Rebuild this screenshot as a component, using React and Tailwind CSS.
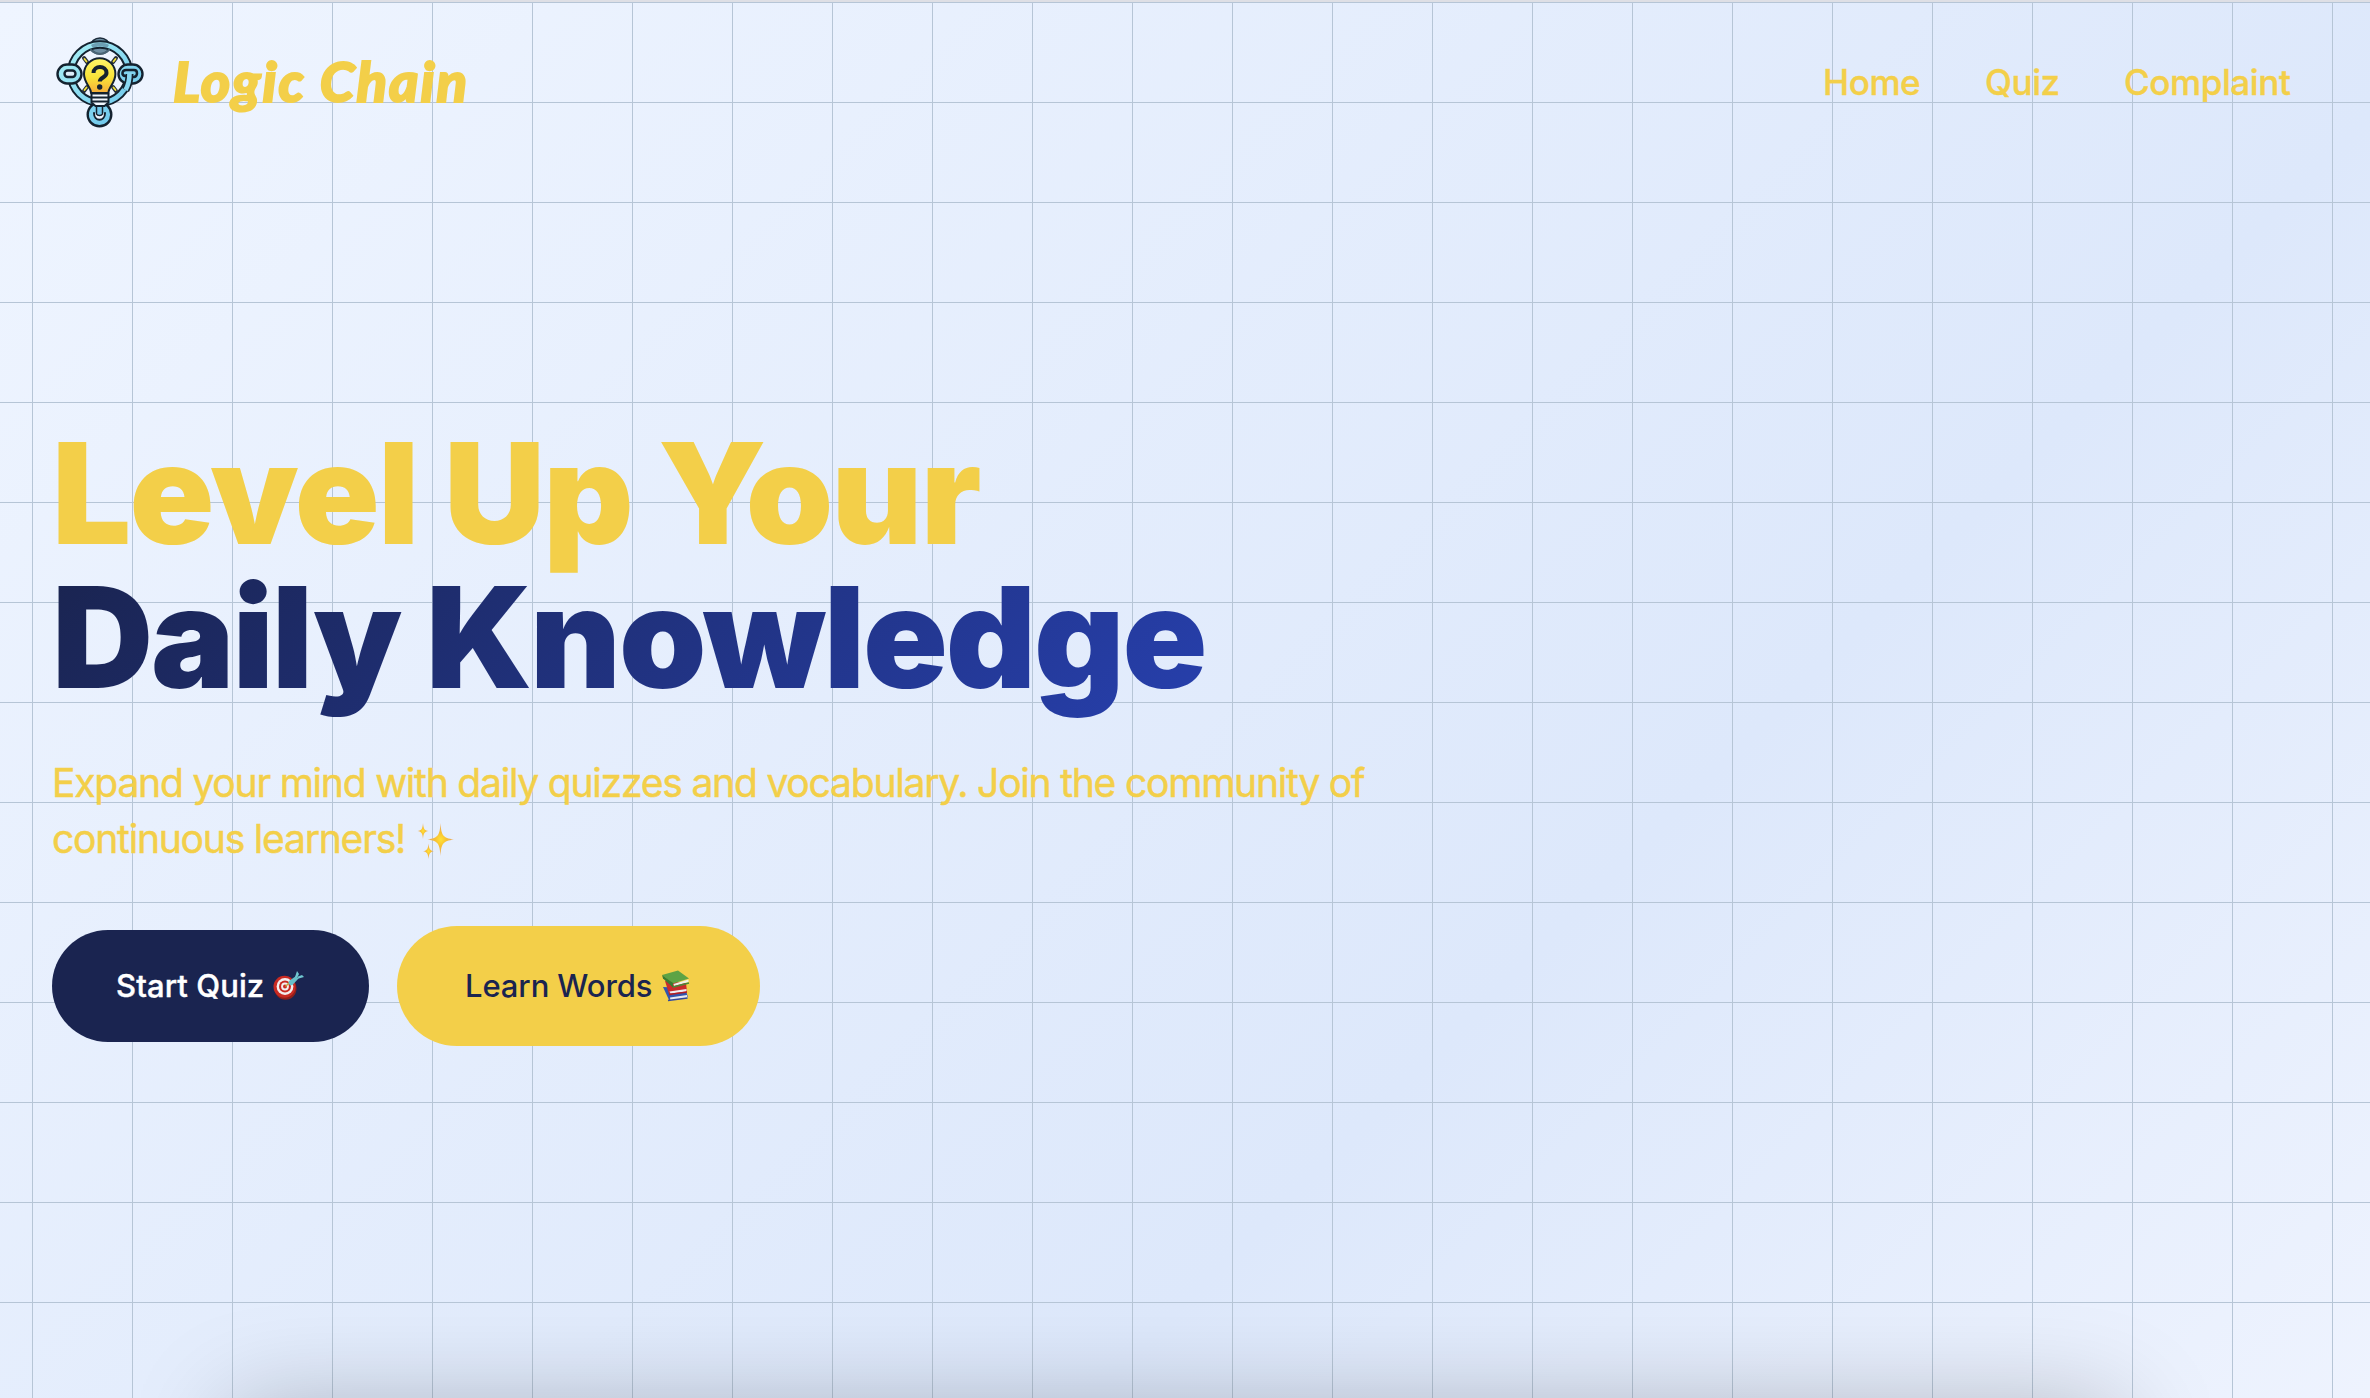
function Logo() {
  return (
    <svg className="-ml-[2px] block h-[100px] w-24" viewBox="50 32 96 100" fill="none" strokeLinecap="round" strokeLinejoin="round">
      <defs>
        <linearGradient id="bulb" x1="0" y1="58" x2="0" y2="94" gradientUnits="userSpaceOnUse">
          <stop offset="0" stopColor="#fff86a" />
          <stop offset="0.55" stopColor="#f8e238" />
          <stop offset="1" stopColor="#f5a93a" />
        </linearGradient>
        <linearGradient id="ring" x1="60" y1="40" x2="140" y2="125" gradientUnits="userSpaceOnUse">
          <stop offset="0" stopColor="#aef3f6" />
          <stop offset="1" stopColor="#62bfea" />
        </linearGradient>
      </defs>
      <ellipse cx="100" cy="46" rx="9.5" ry="8" fill="#6f8fa3" stroke="#1b2b3a" strokeWidth="1.5" />
      <circle cx="100" cy="73.500" r="29" stroke="#14222f" strokeWidth="8.600" />
      <circle cx="100" cy="73.500" r="29" stroke="url(#ring)" strokeWidth="4.600" />
      <path d="M91 45c4-3 14-3 18 0l-2 3c-4-2-10-2-14 0z" fill="#5a8299" opacity=".7" />
      <path d="M91 50c5 5 13 5 18 0" stroke="#4a6475" strokeWidth="2" />
      <path d="M84 58l3 4M116 58l-3 4M84 91l3-4M116 91l-3-4" stroke="#28303a" strokeWidth="4" />
      <path d="M84.500 59l2 2.500M115.500 59l-2 2.500M84.500 90l2-2.500M115.500 90l-2-2.500" stroke="#f4e23b" strokeWidth="1.800" />
      <rect x="57.500" y="64.500" width="24" height="19" rx="9.500" fill="url(#ring)" stroke="#14222f" strokeWidth="2.400" />
      <rect x="64.500" y="70.500" width="11" height="6.500" rx="3.200" fill="#dceefa" stroke="#14222f" strokeWidth="2.400" />
      <rect x="118.500" y="64.500" width="24" height="19" rx="9.500" fill="url(#ring)" stroke="#14222f" strokeWidth="2.400" />
      <path d="M125 76c-4-1-3-6 1-6h8c4 0 4 6 0 7" stroke="#14222f" strokeWidth="2.500" />
      <path d="M129.500 74c0 6-1 11-4 16" stroke="#14222f" strokeWidth="8" strokeLinecap="butt" />
      <path d="M129.500 73c0 6-1 12-4 17" stroke="#8ad8f2" strokeWidth="4.600" strokeLinecap="butt" />
      <circle cx="99.500" cy="114.500" r="11.800" fill="url(#ring)" stroke="#14222f" strokeWidth="2.400" />
      <path d="M94 113c0 9 11 9 11 0" fill="#eef5ff" stroke="#14222f" strokeWidth="2" />
      <path d="M96.500 106h6v8c-1 2-5 2-6 0z" fill="#72c8ec" stroke="#14222f" strokeWidth="1.500" />
      <path d="M91 93c0-6-7-10-7-19a15.700 15.700 0 0 1 31.400 0c0 9-7 13-7 19z" fill="url(#bulb)" stroke="#14222f" strokeWidth="2" />
      <path d="M91.500 93.500h17v9l-4 3.500h-9l-4-3.500z" fill="#f2f8ff" stroke="#14222f" strokeWidth="2" />
      <path d="M92 97.500h16M92 101.500h16" stroke="#14222f" strokeWidth="2" />
      <path d="M93.500 73c0-8 13-8 13 0 0 4.500-6.700 4.500-6.700 8.500" stroke="#14222f" strokeWidth="4" strokeLinecap="butt" />
      <circle cx="99.700" cy="87" r="2.700" fill="#14222f" />
    </svg>
  );
}

function Sparkles() {
  return (
    <svg className="ml-[12px] inline-block h-[38px] w-[38px] align-[-7px]" viewBox="0 0 38 38">
      <defs>
        <radialGradient id="gold">
          <stop offset="0" stopColor="#ffe336" />
          <stop offset="0.4" stopColor="#f8c233" />
          <stop offset="1" stopColor="#e5a668" />
        </radialGradient>
      </defs>
      <path d="M23.500 1c.8 12 2 15 13.500 16.500-11.500 1.500-12.700 4.500-13.500 16.500-.8-12-2-15-13-16.500 11-1.500 12.200-4.500 13-16.500z" fill="url(#gold)" />
      <path d="M6 1c.5 5.500 1.200 7.500 5.500 8-4.300.8-5 2.500-5.500 8-.5-5.500-1.200-7.200-5.500-8 4.300-.5 5-2.500 5.500-8z" fill="url(#gold)" />
      <path d="M11.500 21.500c.5 5 1.200 7 5.500 7.800-4.300.8-5 2.500-5.500 7.700-.5-5.200-1.200-6.900-5.500-7.700 4.300-.8 5-2.800 5.500-7.800z" fill="url(#gold)" />
    </svg>
  );
}

function Target() {
  return (
    <svg className="h-8 w-8 shrink-0" viewBox="0 0 32 32">
      <ellipse cx="12.500" cy="18.500" rx="11" ry="11.200" fill="#8e1f1b" />
      <circle cx="11.500" cy="16.700" r="11" fill="#c92a22" />
      <circle cx="12" cy="16.500" r="8.400" fill="#f3eeee" />
      <circle cx="12" cy="16.500" r="6" fill="#c92a22" />
      <circle cx="12" cy="16.500" r="3.900" fill="#f3eeee" />
      <circle cx="12" cy="16.500" r="2" fill="#c92a22" />
      <path d="M12.500 16.500l4-4" stroke="#c9a53a" strokeWidth="1.500" />
      <path d="M16 11l7-5 2.500 2.500-6 6.500c-2 1-5-1-3.500-4z" fill="#66bfc9" />
      <path d="M22 7l2-6 2 3-1.500 3zM24 9l7-2-2-2-4 1.500z" fill="#6fc6d0" />
    </svg>
  );
}

function Books() {
  return (
    <svg className="h-8 w-7 shrink-0" viewBox="0 0 28 32">
      <path d="M1 17l6 13 19-3-3-9z" fill="#3155ae" />
      <path d="M8 27.500l17-2.500 .5 2.500-17 3z" fill="#e9eaf0" />
      <path d="M6 30.500l19.500-2.500" stroke="#31489c" strokeWidth="1.300" />
      <path d="M3 11l4 13 18-2-1-9z" fill="#c92c2b" />
      <path d="M7.500 21.500l17-2.500v2.500l-16 2z" fill="#eeeef2" />
      <path d="M7 24.500l18-2.500" stroke="#b32025" strokeWidth="1.300" />
      <path d="M0 5l16-4.500 11 8-16 5z" fill="#5da345" />
      <path d="M0 5l11 8v4.500L1 8.500z" fill="#397c31" />
      <path d="M11.500 14l15-4.500v2.500l-14.500 4z" fill="#eef1ea" />
      <path d="M11 17l16-4" stroke="#458c38" strokeWidth="1.300" />
    </svg>
  );
}

const links = [
  { label: "Home", style: "w-[98px]" },
  { label: "Quiz", style: "w-[75px]" },
  { label: "Complaint", style: "w-[168px]" },
];

export default function App() {
  return (
    <div className="relative flex h-[1398px] w-[2370px] flex-col overflow-hidden border-t-2 border-[#dedfe5] bg-[linear-gradient(to_right,#b6c5d6_1px,transparent_1px),linear-gradient(to_bottom,#b6c5d6_1px,transparent_1px),linear-gradient(135deg,#eff5ff_0%,#dde8fb_66%,#eef3fe_100%)] bg-[size:100px_100px,100px_100px,100%_100%] bg-[position:32px_0px,32px_0px,0px_0px] font-['Inter',sans-serif] text-[#f3cf49]">
      <header className="flex h-[160px] items-center justify-between pl-[52px] pr-[78px]">
        <div className="flex items-center gap-[27px]">
          <Logo />
          <span className="-mt-[3px] whitespace-nowrap font-['Lato',sans-serif] text-[56px] font-black italic leading-none tracking-[2px] [-webkit-text-stroke:2px_#f3cf49]">Logic Chain</span>
        </div>
        <nav className="flex gap-[64px]">
          {links.map((l) => (
            <a key={l.label} className={`${l.style} whitespace-nowrap text-[35px] font-medium leading-[52px] tracking-[-0.4px] [-webkit-text-stroke:0.4px_#f3cf49]`}>{l.label}</a>
          ))}
        </nav>
      </header>
      <main className="pl-[52px] pt-[259px]">
        <h1 className="whitespace-nowrap text-[140px] font-black leading-[144px]">
          <span className="block tracking-[-1.7px]">Level Up Your</span>
          <span className="-mb-5 block w-[1180px] bg-[linear-gradient(135deg,#1a2450,#2740af)] bg-clip-text pb-5 tracking-[-2.1px] text-transparent">Daily Knowledge</span>
        </h1>
        <p className="mt-[46px] whitespace-nowrap text-[39px] leading-[56px] tracking-[-1.2px] [-webkit-text-stroke:0.5px_#f3cf49]">
          Expand your mind with daily quizzes and vocabulary. Join the community of<br />
          continuous learners!<Sparkles />
        </p>
        <div className="mt-[59px] flex items-center gap-[28px] text-[31px] font-medium">
          <button className="flex h-[112px] w-[317px] items-center gap-[8px] rounded-full bg-[#1a2450] pl-[64px] text-white [-webkit-text-stroke:0.4px_#ffffff]">
            <span className="w-[149px] whitespace-nowrap pt-px text-left tracking-[0.1px]">Start Quiz</span>
            <Target />
          </button>
          <button className="flex h-[120px] w-[363px] items-center gap-[9px] rounded-full bg-[#f3cf49] pl-[68px] text-[#1a2450]">
            <span className="w-[188px] whitespace-nowrap pt-px text-left tracking-[-0.1px]">Learn Words</span>
            <Books />
          </button>
        </div>
      </main>
      <div className="absolute -bottom-[210px] left-[232px] h-[200px] w-[1886px] shadow-[0_0_100px_rgba(0,0,0,0.25)]" />
    </div>
  );
}
